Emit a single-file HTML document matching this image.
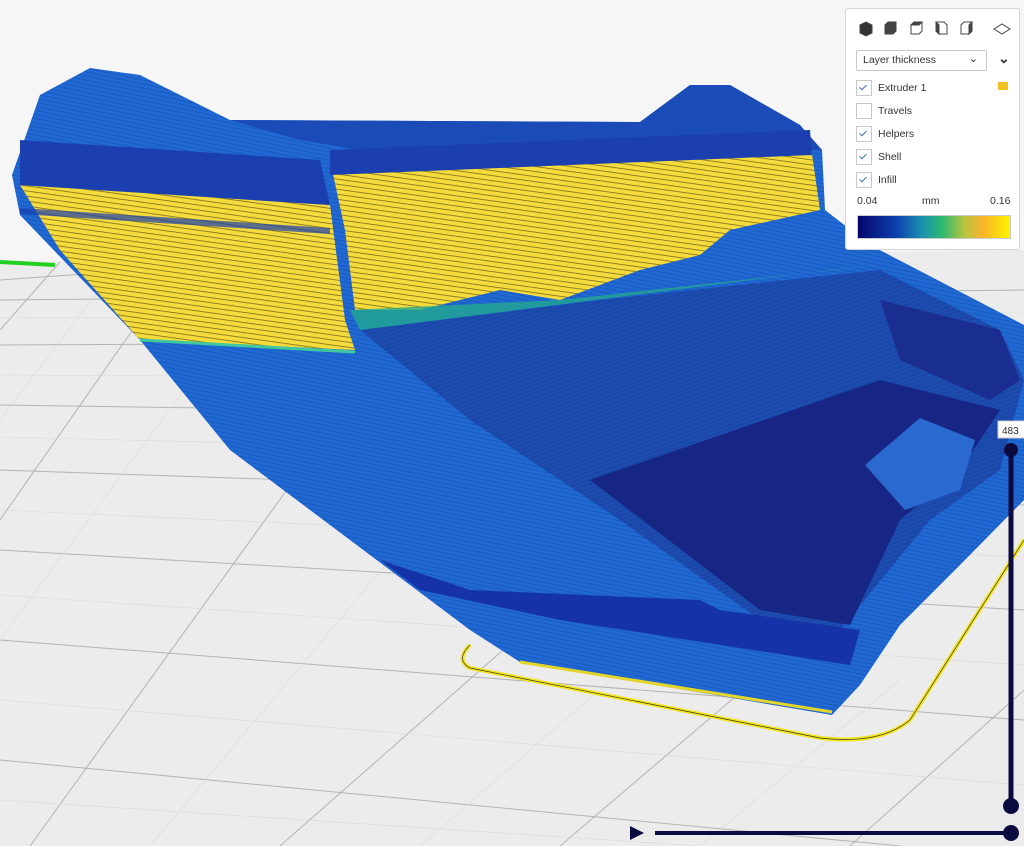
<!DOCTYPE html>
<html><head><meta charset="utf-8"><style>
html,body{margin:0;padding:0;width:1024px;height:846px;overflow:hidden;background:#f6f6f6;font-family:"Liberation Sans",sans-serif}
svg{position:absolute;left:0;top:0}
.panel{position:absolute;left:845px;top:8px;width:173px;height:240px;background:#fff;border:1px solid #d4d4d4;border-radius:3px;font-size:10.5px;color:#333}
.cb{position:absolute;left:10px;width:14px;height:14px;border:1px solid #c8c8c8;background:#fff}
.cb.on::after{content:"";position:absolute;left:4px;top:2px;width:3px;height:6px;border:solid #3a72b8;border-width:0 1.3px 1.3px 0;transform:rotate(45deg)}
.lbl{position:absolute;left:32px}
</style></head><body>
<svg width="1024" height="846" viewBox="0 0 1024 846">
<defs>
<pattern id="ys" width="8" height="5" patternUnits="userSpaceOnUse" patternTransform="rotate(8)"><rect width="8" height="5" fill="#f5dc3c"/><rect width="8" height="0.8" fill="#7a6a20"/></pattern>
<pattern id="bs" width="6" height="4" patternUnits="userSpaceOnUse" patternTransform="rotate(12)"><rect width="6" height="4" fill="#2068d4"/><rect width="6" height="1" fill="#1b5abc"/></pattern>
<pattern id="ds" width="6" height="4" patternUnits="userSpaceOnUse" patternTransform="rotate(-20)"><rect width="6" height="4" fill="#1d4cb0"/><rect width="6" height="1" fill="#1942a0"/></pattern>
</defs>
<polygon points="0,262 1024,250 1024,846 0,846" fill="#ececec"/>
<g stroke="#b3b3b3" stroke-width="1" fill="none">
<line x1="0" y1="300" x2="1024" y2="290"/>
<line x1="0" y1="345" x2="1024" y2="340"/>
<line x1="0" y1="405" x2="1024" y2="420"/>
<line x1="0" y1="470" x2="1024" y2="505"/>
<line x1="0" y1="550" x2="1024" y2="610"/>
<line x1="0" y1="640" x2="1024" y2="720"/>
<line x1="0" y1="760" x2="900" y2="846"/>
<line x1="0" y1="280" x2="140" y2="270"/>
<line x1="0" y1="330" x2="60" y2="262"/>
<line x1="0" y1="520" x2="180" y2="262"/>
<line x1="30" y1="846" x2="330" y2="430"/>
<line x1="280" y1="846" x2="560" y2="600"/>
<line x1="560" y1="846" x2="790" y2="650"/>
<line x1="850" y1="846" x2="1024" y2="690"/>
</g>
<g stroke="#dadada" stroke-width="0.6" fill="none">
<line x1="0" y1="318" x2="1024" y2="312"/><line x1="0" y1="375" x2="1024" y2="380"/>
<line x1="0" y1="437" x2="1024" y2="462"/><line x1="0" y1="510" x2="1024" y2="557"/>
<line x1="0" y1="595" x2="1024" y2="665"/><line x1="0" y1="700" x2="1024" y2="785"/>
<line x1="0" y1="800" x2="700" y2="846"/>
<line x1="0" y1="420" x2="120" y2="262"/><line x1="0" y1="640" x2="250" y2="300"/>
<line x1="150" y1="846" x2="440" y2="500"/><line x1="420" y1="846" x2="680" y2="620"/>
<line x1="700" y1="846" x2="900" y2="680"/>
</g>
<line x1="0" y1="262" x2="55" y2="265" stroke="#22d022" stroke-width="4"/>
<path d="M470,645 Q455,660 470,668 L820,738 Q880,745 910,720 L1024,540" fill="none" stroke="#f3e51a" stroke-width="4"/>
<path d="M470,645 Q455,660 470,668 L820,738 Q880,745 910,720 L1024,540" fill="none" stroke="#333" stroke-width="0.7"/>
<polygon points="12,175 40,95 90,68 140,75 230,120 640,122 690,85 730,85 800,125 822,150 825,210 870,245 1024,325 1024,500 960,565 900,625 860,685 832,715 520,662 470,630 230,450 140,340 20,215" fill="url(#bs)"/>
<polygon points="230,120 640,122 690,85 730,85 800,125 822,150 360,150 300,140" fill="#1b4bb6"/>
<polygon points="360,330 600,300 880,270 1000,330 1024,380 1000,470 930,520 840,630 760,620 620,520 470,420" fill="url(#ds)"/>
<polygon points="590,480 880,380 1000,410 960,470 900,520 850,625 760,610" fill="#172684"/>
<polygon points="880,300 1000,330 1020,380 990,400 900,360" fill="#1a2d90"/>
<polygon points="380,560 470,590 700,600 720,610 860,630 850,665 560,620 420,590" fill="#1632a8"/>
<polygon points="865,465 920,418 975,440 960,490 905,510" fill="#2a6ad0"/>
<polygon points="20,185 330,205 345,320 355,350 140,340 60,250" fill="url(#ys)"/>
<polygon points="20,140 320,160 330,205 20,185" fill="#1b3fae"/>
<polygon points="20,208 330,228 330,234 20,214" fill="#1a3fae" opacity="0.7"/>
<polygon points="330,160 810,140 820,210 730,230 700,255 640,270 560,300 500,290 420,310 355,310 345,230" fill="url(#ys)"/>
<polygon points="330,150 810,130 812,155 330,175" fill="#1b3fae"/>
<polygon points="350,310 560,300 880,265 830,270 360,330" fill="#22a890" opacity="0.8"/>
<line x1="140" y1="340" x2="355" y2="352" stroke="#3fc7a0" stroke-width="3"/>
<line x1="520" y1="662" x2="832" y2="712" stroke="#e3d52a" stroke-width="3"/>
<line x1="1011" y1="450" x2="1011" y2="806" stroke="#0b0b3f" stroke-width="5"/>
<line x1="655" y1="833" x2="1011" y2="833" stroke="#0b0b3f" stroke-width="4"/>
<circle cx="1011" cy="450" r="7" fill="#0b0b3f"/>
<circle cx="1011" cy="806" r="8" fill="#0b0b3f"/>
<circle cx="1011" cy="833" r="8" fill="#0b0b3f"/>
<polygon points="630,826 644,833 630,840" fill="#0b0b3f"/>
<rect x="998" y="421" width="28" height="17" fill="#fff" stroke="#ccc"/>
<text x="1002" y="434" font-size="10" fill="#333" font-family="Liberation Sans">483</text>
</svg>
<div class="panel">
<svg width="173" height="40" style="position:absolute;left:0;top:0">
<g fill="#444" stroke="#444" stroke-width="1">
<polygon points="14,16 20,13 26,16 26,24 20,27 14,24" fill="#333"/>
<polygon points="39,16 42,13 50,13 50,22 47,25 39,25" fill="#444"/>
<polygon points="65,16 68,13 76,13 76,22 73,25 65,25" fill="none"/><polygon points="68,13 76,13 73,16 65,16" fill="#444"/>
<polygon points="90,13 98,13 101,16 101,25 93,25 90,22" fill="none"/><polygon points="90,13 93,16 93,25 90,22" fill="#444"/>
<polygon points="115,16 118,13 126,13 126,22 123,25 115,25" fill="none"/><polygon points="126,13 126,22 123,25 123,16" fill="#444"/>
<polygon points="148,20 156,15 164,20 156,25" fill="none"/>
</g></svg>
<div style="position:absolute;left:10px;top:41px;width:129px;height:19px;border:1px solid #c8c8c8;border-radius:2px"><span style="position:absolute;left:6px;top:3px">Layer thickness</span><span style="position:absolute;right:8px;top:1px;font-size:11px">&#8964;</span></div>
<div style="position:absolute;left:152px;top:41px;font-size:14px;font-weight:bold">&#8964;</div>
<div class="cb on" style="top:71px"></div><div class="lbl" style="top:73px">Extruder 1</div>
<div style="position:absolute;left:152px;top:73px;width:10px;height:8px;background:#f2c01e;border-radius:1px"></div>
<div class="cb" style="top:94px"></div><div class="lbl" style="top:96px">Travels</div>
<div class="cb on" style="top:117px"></div><div class="lbl" style="top:119px">Helpers</div>
<div class="cb on" style="top:140px"></div><div class="lbl" style="top:142px">Shell</div>
<div class="cb on" style="top:163px"></div><div class="lbl" style="top:165px">Infill</div>
<div style="position:absolute;left:11px;top:186px">0.04</div>
<div style="position:absolute;left:76px;top:186px">mm</div>
<div style="position:absolute;left:144px;top:186px">0.16</div>
<div style="position:absolute;left:11px;top:206px;width:152px;height:22px;border:1px solid #ccc;background:linear-gradient(90deg,#06066a,#0c3fae 25%,#1b90b0 42%,#2ab870 55%,#b6c440 70%,#f7b42a 82%,#fff200)"></div>
</div>
</body></html>
